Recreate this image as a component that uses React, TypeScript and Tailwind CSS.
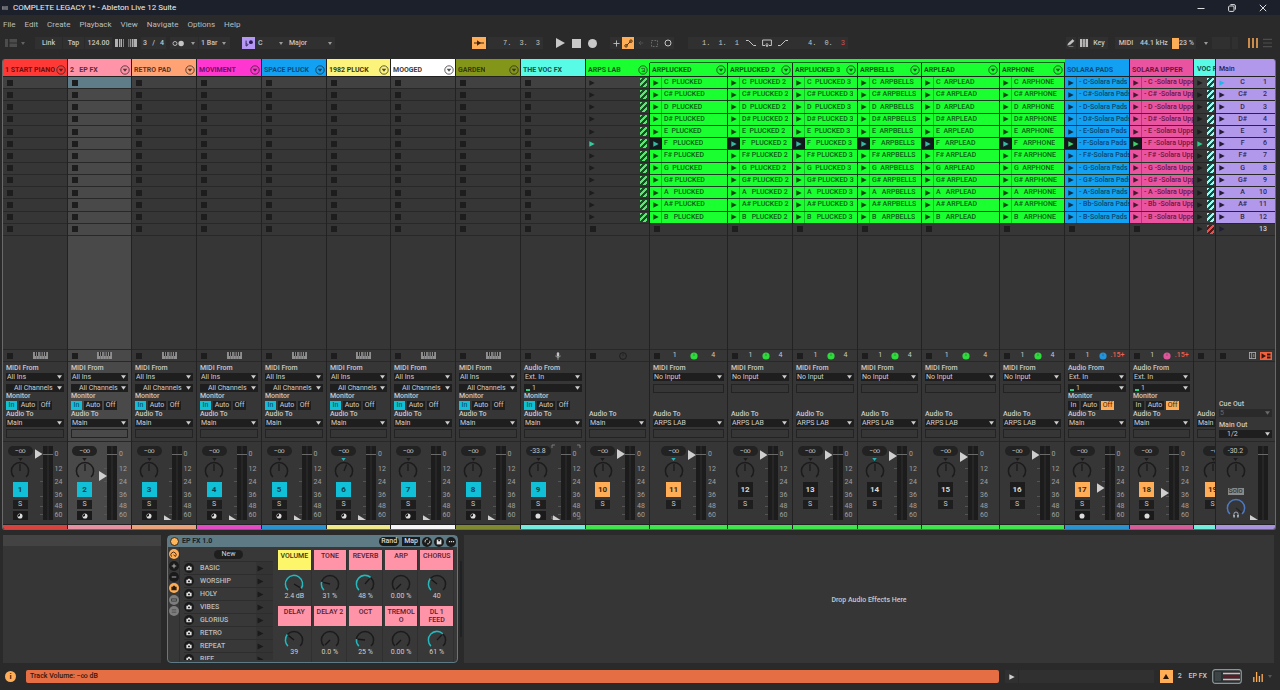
import React from "react";

type Monitor = "In" | "Off" | null;

interface Track {
  no: string;
  title: string;
  header: string;
  strip: string;
  io: "midi" | "audio" | "none" | "input" | "hidden";
  monitor: Monitor;
  badge: "cyan" | "orange" | "dark";
  vol: string;
  fader: number | null;
  arm?: "midi" | "audio";
  clip?: string;
  clipBg?: string;
  clips?: string[];
  group?: boolean;
  nested?: boolean;
  selected?: boolean;
  menu?: boolean;
  pan?: number;
  panMoved?: boolean;
  pie?: string;
  count?: string;
  out: string;
}

const KEYS = ["C", "C#", "D", "D#", "E", "F", "F#", "G", "G#", "A", "A#", "B"];
const GAPS = [2, 1, 2, 1, 2, 3, 1, 2, 1, 3, 1, 3];

const named = (s: string) => KEYS.map((k, i) => k + "\u00a0".repeat(GAPS[i]) + s);
const solara = (s: string, sep: string) =>
  KEYS.map((k, i) => `- ${i === 10 ? "Bb" : k}${sep}${s}`);

const midi = (no: string, title: string, header: string, strip: string, extra: Partial<Track> = {}): Track => ({
  no, title, header, strip, io: "midi", monitor: "In", badge: "cyan", vol: "−∞", fader: 0, arm: "midi", menu: true, out: "Main", ...extra,
});

const arp = (no: string, title: string, clip: string, fader: number, extra: Partial<Track> = {}): Track => ({
  no, title, header: "bg-[#1aff2f] text-[#0c5a16]", strip: "bg-[#3fe34c]", io: "input", monitor: null, badge: "dark", vol: "−∞",
  fader, menu: true, nested: true, clips: named(clip), clipBg: "bg-[#1aff2f] text-[#0b5d15]", pie: "#2fdb3c", count: "4", out: "ARPS LAB", ...extra,
});

const TRACKS: Track[] = [
  midi("1", "1 START PIANO", "bg-[#ff3a36] text-[#6d0f10]", "bg-[#d8423f]", { fader: 66 }),
  midi("2", "2\u00a0\u00a0\u00a0EP FX", "bg-[#ff94a8] text-[#5e2b38]", "bg-[#e690a2]", { fader: 44, selected: true }),
  midi("3", "RETRO PAD", "bg-[#ffa374] text-[#5f331c]", "bg-[#e9a27a]"),
  midi("4", "MOVIMENT", "bg-[#ff37d0] text-[#75105f]", "bg-[#e14bc4]"),
  midi("5", "SPACE PLUCK", "bg-[#12a1f2] text-[#0a4b78]", "bg-[#2b92d0]"),
  midi("6", "1982 PLUCK", "bg-[#fbf37c] text-[#3c3a14]", "bg-[#efe98a]", { pan: 0.58, panMoved: true }),
  midi("7", "MOOGED", "bg-[#ffffff] text-[#3c3c3c]", "bg-[#f6f6f6]"),
  midi("8", "GARDEN", "bg-[#84961a] text-[#343c08]", "bg-[#7f8a30]"),
  midi("9", "THE VOC FX", "bg-[#58fbe6] text-[#154f49]", "bg-[#74ebdc]", { io: "audio", vol: "-33.8", arm: "audio", menu: false }),
  midi("10", "ARPS LAB", "bg-[#1aff2f] text-[#0c5a16]", "bg-[#3fe34c]", { io: "none", monitor: null, badge: "orange", fader: 66, arm: undefined, group: true }),
  arp("11", "ARPLUCKED", "PLUCKED", 65, { badge: "orange", panMoved: true }),
  arp("12", "ARPLUCKED 2", "PLUCKED 2", 65),
  arp("13", "ARPLUCKED 3", "PLUCKED 3", 65),
  arp("14", "ARPBELLS", "ARPBELLS", 64, { panMoved: true }),
  arp("15", "ARPLEAD", "ARPLEAD", 63),
  arp("16", "ARPHONE", "ARPHONE", 65),
  midi("17", "SOLARA PADS", "bg-[#12a1f2] text-[#0a4b78]", "bg-[#2b92d0]", {
    io: "audio", monitor: "Off", badge: "orange", fader: 32, arm: "audio", menu: false,
    clips: solara("Solara Pads", "-"), clipBg: "bg-[#12a1f2] text-[#0a4670]", pie: "#2394dc", count: ".15+",
  }),
  midi("18", "SOLARA UPPER", "bg-[#ea539f] text-[#6a1641]", "bg-[#d45c99]", {
    io: "audio", monitor: "Off", badge: "orange", fader: 27, arm: "audio", menu: false,
    clips: solara("Solara Upper", " -"), clipBg: "bg-[#ea539f] text-[#6a1641]", pie: "#e0559c", count: ".15+",
  }),
];

const GRID =
  "grid-cols-[65fr_64fr_65fr_65fr_65fr_64fr_65fr_65fr_65fr_64fr_78fr_65fr_65fr_64fr_78fr_65fr_65fr_64fr_22fr_59fr]";

const ROW = "min-w-0 overflow-hidden border-b border-[#282828]";

function Play({ className = "text-[#1c1c1c]" }: { className?: string }) {
  return (
    <svg viewBox="0 0 6 6" className={`h-[6px] w-[6px] shrink-0 ${className}`}>
      <path d="M0.3 0.3 L5.7 3 L0.3 5.7 Z" fill="currentColor" />
    </svg>
  );
}

function Stop() {
  return <span className="h-[6px] w-[6px] shrink-0 bg-[#1d1d1d]" />;
}

function Caret({ className = "text-[#c4c4c4]" }: { className?: string }) {
  return (
    <svg viewBox="0 0 6 4" className={`pointer-events-none h-[4px] w-[5px] shrink-0 ${className}`}>
      <path d="M0 0 H6 L3 4 Z" fill="currentColor" />
    </svg>
  );
}

function HeaderMenu({ fold = false }: { fold?: boolean }) {
  return (
    <button aria-label="Track options" className="shrink-0">
      <svg viewBox="0 0 10 10" className="h-[10px] w-[10px] text-[#222] opacity-80">
        <circle cx="5" cy="5" r="4.2" fill="none" stroke="currentColor" strokeWidth="0.9" />
        {fold ? (
          <path d="M3.2 3.4 H6.6 V6.6 H3.6 M4.4 5 L6.6 6.6" fill="none" stroke="currentColor" strokeWidth="0.7" />
        ) : (
          <path d="M2.7 3.8 H7.3 L5 6.7 Z" fill="currentColor" />
        )}
      </svg>
    </button>
  );
}

function Keyboard() {
  return (
    <svg viewBox="0 0 15 7" className="h-[7px] w-[15px]">
      <rect width="15" height="7" fill="#8f8f8f" />
      <path d="M2.5 0 V4 M4.5 0 V4 M8 0 V4 M10.3 0 V4 M12.6 0 V4" stroke="#2a2a2a" strokeWidth="1.1" />
      <path d="M3.5 4 V7 M6.2 0 V7 M9 4 V7 M11.5 4 V7" stroke="#5a5a5a" strokeWidth="0.5" />
    </svg>
  );
}

function Dial({ value, label, accent, track = "#1b1b1b", pointer = "#1b1b1b", className = "h-[20px] w-[20px]" }: {
  value: number; label: string; accent?: string; track?: string; pointer?: string; className?: string;
}) {
  const at = (v: number, r: number) => {
    const a = ((v * 270 + 135) * Math.PI) / 180;
    return `${(10 + r * Math.cos(a)).toFixed(2)} ${(10 + r * Math.sin(a)).toFixed(2)}`;
  };
  return (
    <span className={`relative block shrink-0 ${className}`}>
      <svg viewBox="0 0 20 20" className="h-full w-full">
        <path d={`M${at(0, 8.6)} A8.6 8.6 0 1 1 ${at(1, 8.6)}`} fill="none" stroke={track} strokeWidth="1.5" />
        {accent && value > 0 && (
          <path d={`M${at(0, 8.6)} A8.6 8.6 0 ${value > 0.66 ? 1 : 0} 1 ${at(value, 8.6)}`} fill="none" stroke={accent} strokeWidth="1.6" />
        )}
        <path d={`M10 10 L${at(value, 7)}`} stroke={pointer} strokeWidth="1.3" />
      </svg>
      <input type="range" aria-label={label} min={0} max={100} defaultValue={Math.round(value * 100)} className="absolute inset-0 h-full w-full opacity-0" />
    </span>
  );
}

function Select({ label, value, indent = "pl-1", lit = false, dim = false }: {
  label: string; value: string; indent?: string; lit?: boolean; dim?: boolean;
}) {
  return (
    <span className={`flex h-[8px] items-center pr-[2px] ${dim ? "bg-[#2a2a2a]" : "bg-[#1e1e1e]"}`}>
      {lit && <span className="ml-[2px] h-[2px] w-[4px] shrink-0 self-end bg-[#25d07c] mb-px" />}
      <select aria-label={label} className={`h-[8px] min-w-0 flex-1 appearance-none text-[7px] leading-[8px] outline-none ${indent} ${dim ? "text-[#6a6a6a]" : "text-[#cfcfcf]"}`}>
        <option>{value}</option>
      </select>
      <Caret className={dim ? "text-[#6a6a6a]" : "text-[#cfcfcf]"} />
    </span>
  );
}

const Lbl = ({ children }: { children: React.ReactNode }) => (
  <span className="block h-[9px] text-[7px] leading-[9px] font-medium whitespace-nowrap text-[#c9c9c9]">{children}</span>
);

const EmptyBox = () => <span className="block h-[9px] border border-[#232323]" />;

function MonitorButtons({ active }: { active: Monitor }) {
  const on = active === "In" ? "bg-[#11bfd6] text-[#0b3f48]" : "bg-[#ffad56] text-[#3d2508]";
  return (
    <div className="flex h-[9px] gap-[2px] text-[7px] leading-[9px]">
      {["In", "Auto", "Off"].map((m) => (
        <button key={m} className={`${m === "Auto" ? "w-[18px]" : m === "Off" ? "w-[13px]" : "w-[11px]"} ${m === active ? on : "bg-[#1e1e1e] text-[#d0d0d0]"}`}>
          {m}
        </button>
      ))}
    </div>
  );
}

function IO({ t }: { t: Track }) {
  return (
    <div className="flex h-[80px] flex-col justify-between overflow-hidden border-b border-[#282828] px-[3px] pt-[2px] pb-[3px]">
      <div className="flex flex-col">
        {t.io !== "none" && (
          <>
            <Lbl>{t.io === "audio" ? "Audio From" : "MIDI From"}</Lbl>
            <Select label={`${t.title} input type`} value={t.io === "midi" ? "All Ins" : t.io === "audio" ? "Ext. In" : "No Input"} indent="pl-[1px]" />
            <div className="mt-[3px]">
              {t.io === "input" ? <EmptyBox /> : t.io === "audio" ? (
                <Select label={`${t.title} input channel`} value="1" indent="pl-[2px]" lit />
              ) : (
                <Select label={`${t.title} input channel`} value="All Channels" indent="pl-2" />
              )}
            </div>
          </>
        )}
        {t.monitor && (
          <>
            <Lbl>Monitor</Lbl>
            <MonitorButtons active={t.monitor} />
          </>
        )}
      </div>
      <div className="flex flex-col">
        <Lbl>Audio To</Lbl>
        <Select label={`${t.title} output`} value={t.out} indent="pl-[1px]" />
        <div className="mt-[2px]"><EmptyBox /></div>
      </div>
    </div>
  );
}

function Fader({ value, label, scale = true }: { value: number | null; label: string; scale?: boolean }) {
  return (
    <div className="flex h-[74px] overflow-hidden">
      {value === null ? (
        <span className="w-[8px]" />
      ) : (
        <input
          type="range" aria-label={label} min={0} max={69} defaultValue={value}
          className="h-[79px] w-[8px] appearance-none bg-transparent [direction:rtl] [writing-mode:vertical-lr] [&::-webkit-slider-thumb]:h-[10px] [&::-webkit-slider-thumb]:w-[8px] [&::-webkit-slider-thumb]:appearance-none [&::-webkit-slider-thumb]:bg-[#cfcfcf] [&::-webkit-slider-thumb]:[clip-path:polygon(0_0,100%_50%,0_100%)]"
        />
      )}
      <svg viewBox="0 0 10 74" className="h-[74px] w-[10px] shrink-0">
        <rect width="10" height="74" fill="#1c1c1c" />
        <rect x="4.5" width="1" height="74" fill="#303030" />
        <rect y="8" width="10" height="1" fill="#6a6a6a" />
      </svg>
      {scale && (
        <div className="flex w-[10px] flex-col pl-[2px] text-[7px] font-normal text-[#a0a0a0]">
          <span className="h-[16px] leading-[16px]">0</span>
          <span className="h-[14px] leading-[14px]">12</span>
          <span className="h-[13px] leading-[13px]">24</span>
          <span className="h-[13px] leading-[13px]">36</span>
          <span className="h-[9px] leading-[9px]">48</span>
          <span className="h-[9px] leading-[9px]">60</span>
        </div>
      )}
    </div>
  );
}

function Ticks() {
  return (
    <svg viewBox="0 0 3 74" className="pointer-events-none h-[74px] w-[3px]">
      {[22, 35, 50, 60, 68].map((y) => <rect key={y} y={y} width="3" height="1" fill="#555" />)}
    </svg>
  );
}

const BADGE = {
  cyan: "bg-[#11bfd6] text-[#0b3f48]",
  orange: "bg-[#ffad56] text-[#3d2508]",
  dark: "bg-[#1c1c1c] text-[#d8d8d8]",
};

function VolumePill({ children }: { children: React.ReactNode }) {
  return <span className="block h-[10px] w-[25px] rounded-full bg-[#222] text-center text-[7px] leading-[10px] text-[#c4c4c4]">{children}</span>;
}

function Pan({ value = 0.5, moved = false, label }: { value?: number; moved?: boolean; label: string }) {
  return (
    <div className="flex w-[20px] flex-col items-center">
      <svg viewBox="0 0 6 4" className={`mt-[2px] h-[3px] w-[5px] ${moved ? "text-[#22b5b5]" : "text-[#1b1b1b]"}`}>
        <path d="M0 0 H6 L3 4 Z" fill="currentColor" />
      </svg>
      <Dial value={value} label={label} />
    </div>
  );
}

function FocusCorners() {
  return (
    <svg viewBox="0 0 30 76" className="pointer-events-none h-[76px] w-[30px]">
      <path d="M1 4 V1 H4 M26 1 H29 V4 M1 72 V75 H4 M26 75 H29 V72" fill="none" stroke="#8a8a8a" strokeWidth="0.8" />
    </svg>
  );
}

function Mixer({ t }: { t: Track }) {
  return (
    <div className="flex h-[82px] justify-center overflow-hidden pt-[4px]">
      <div className="flex w-[25px] shrink-0 flex-col items-center">
        <VolumePill>{t.vol}</VolumePill>
        <Pan value={t.pan} moved={t.panMoved} label={`${t.title} pan`} />
        <button className={`mt-px h-[15px] w-[15px] text-[8px] leading-[15px] font-bold ${BADGE[t.badge]}`}>{t.no}</button>
        <button className="mt-[3px] h-[9px] w-[15px] bg-[#1e1e1e] text-[7px] leading-[9px] text-[#c9c9c9]">S</button>
        {t.arm && (
          <button aria-label={`Arm ${t.title}`} className="mt-[2px] flex h-[9px] w-[15px] items-center justify-center bg-[#1a1a1a]">
            <svg viewBox="0 0 8 8" className="h-[6px] w-[6px]">
              <circle cx="4" cy="4" r="3.4" fill="#dcdcdc" />
              {t.arm === "midi" && <path d="M4 4 V1.2 A2.8 2.8 0 0 0 1.4 5 Z" fill="#1a1a1a" />}
            </svg>
          </button>
        )}
      </div>
      <div className="relative ml-[2px] flex shrink-0">
        <span className="absolute top-0 left-[5px]"><Ticks /></span>
        {t.no === "9" && <span className="absolute -top-[2px] -left-[2px]"><FocusCorners /></span>}
        <Fader value={t.fader} label={`${t.title} volume`} />
      </div>
    </div>
  );
}

function Status({ t }: { t: Track }) {
  return (
    <div className="flex h-[13px] items-center overflow-hidden border-y border-[#282828] pl-1">
      <Stop />
      {t.pie ? (
        <div className="mr-1 ml-[5px] grid flex-1 grid-cols-3 items-center justify-items-center text-[7px] text-[#c9c9c9]">
          <span>1</span>
          <svg viewBox="0 0 8 8" className="h-[8px] w-[8px]">
            <circle cx="4" cy="4" r="3.6" fill={t.pie} />
            <path d="M4 4 V1.6" stroke="#1b3b1e" strokeWidth="0.4" />
          </svg>
          <span className={t.count === "4" ? "" : "font-medium text-[#f0604c]"}>{t.count}</span>
        </div>
      ) : (
        <div className="flex flex-1 justify-center">
          {t.io === "midi" && <Keyboard />}
          {t.io === "audio" && (
            <svg viewBox="0 0 6 8" className="h-[8px] w-[6px]">
              <rect x="1.8" y="0.2" width="2.4" height="4.6" rx="1.2" fill="#c4c4c4" />
              <path d="M0.8 3.6 C1 6 5 6 5.2 3.6 M3 5.4 V7.8" fill="none" stroke="#c4c4c4" strokeWidth="0.7" />
            </svg>
          )}
          {t.group && (
            <svg viewBox="0 0 8 8" className="h-[8px] w-[8px]">
              <circle cx="4" cy="4" r="3.4" fill="none" stroke="#1c1c1c" strokeWidth="0.9" />
              <path d="M4 4 V1.6" stroke="#1c1c1c" strokeWidth="0.7" />
            </svg>
          )}
        </div>
      )}
    </div>
  );
}

const GREEN_HATCH = "bg-[repeating-linear-gradient(135deg,#5fe276_0px,#5fe276_2px,#14501f_2px,#14501f_4px)]";
const TEAL_HATCH = "bg-[repeating-linear-gradient(135deg,#9afcf0_0px,#9afcf0_2px,#135049_2px,#135049_4px)]";
const RED_HATCH = "bg-[repeating-linear-gradient(135deg,#f04c4c_0px,#f04c4c_2px,#5c1616_2px,#5c1616_4px)]";

function Slots({ t }: { t: Track }) {
  return (
    <div className="grid h-[159px] grid-rows-13">
      {Array.from({ length: 13 }, (_, i) => {
        if (t.clips && i < 12) {
          const playing = i === 5;
          return (
            <div key={i} className={`flex border-b border-[#1f3a24] ${t.clipBg} min-w-0 overflow-hidden`}>
              <button aria-label={`Launch ${t.clips[i]}`} className={`flex w-[12px] shrink-0 items-center justify-center border-r border-black/25 ${playing ? "bg-[#121a1c]" : ""}`}>
                <Play className={playing ? (t.pie === "#2fdb3c" ? "text-[#35b9a4]" : "text-[#3fd06a]") : "text-black/70"} />
              </button>
              <span className="flex items-center overflow-hidden pl-[2px] text-[7px] leading-[11px] font-medium whitespace-pre">{t.clips[i]}</span>
            </div>
          );
        }
        if (t.group && i < 12) {
          return (
            <div key={i} className={`${ROW} flex items-stretch justify-between pr-[2px] pl-[3px] ${i === 0 ? "bg-[#414141]" : ""}`}>
              <button aria-label={`Launch group slot ${i + 1}`} className="flex items-center">
                <Play className={i === 5 ? "text-[#35c9a0]" : "text-[#1c1c1c]"} />
              </button>
              <span className={`my-px w-[7px] ${GREEN_HATCH}`} />
            </div>
          );
        }
        return (
          <div key={i} className={`${ROW} flex items-center pl-1 ${i === 0 ? (t.selected ? "bg-[#5f7d88]" : "bg-[#414141]") : ""}`}>
            <Stop />
          </div>
        );
      })}
    </div>
  );
}

function Column({ t }: { t: Track }) {
  return (
    <section className={`flex min-w-0 flex-col border-r border-[#222] ${t.selected ? "bg-[#494949]" : "bg-[#363636]"}`}>
      <header className={`flex h-[18px] flex-col border-b border-[#222] ${t.header}`}>
        <span className={`h-[4px] shrink-0 ${t.nested ? "-mr-px border-b border-[#0e6a1a] bg-[#1aff2f]" : ""} ${t.group ? "-mr-px bg-[#1aff2f]" : ""}`} />
        <span className="flex flex-1 items-center justify-between overflow-hidden pr-px pl-[2px]">
          <span className="min-w-0 overflow-hidden text-[7px] leading-[10px] font-bold whitespace-nowrap">{t.title}</span>
          {t.menu && <HeaderMenu fold={t.group} />}
        </span>
      </header>
      <Slots t={t} />
      <div className="flex-1" />
      <Status t={t} />
      <IO t={t} />
      <Mixer t={t} />
      <span className={`h-[5px] border-t border-[#222] ${t.strip}`} />
    </section>
  );
}

function VocColumn() {
  return (
    <section className="flex min-w-0 flex-col overflow-hidden border-r border-[#222] bg-[#363636]">
      <header className="flex h-[18px] items-center overflow-hidden border-b border-[#222] bg-[#58fbe6] pt-[4px] pl-[3px] text-[7px] font-bold whitespace-nowrap text-[#154f49]">VOC FX</header>
      <div className="grid h-[159px] grid-rows-13">
        {Array.from({ length: 13 }, (_, i) => (
          <div key={i} className={`${ROW} flex items-stretch justify-between pr-px pl-[3px] ${i === 0 ? "bg-[#414141]" : ""}`}>
            <button aria-label={`Launch VOC slot ${i + 1}`} className="flex items-center">
              <Play className={i === 5 ? "text-[#2fc98a]" : "text-[#1c1c1c]"} />
            </button>
            <span className={`my-px w-[7px] ${i === 12 ? RED_HATCH : TEAL_HATCH}`} />
          </div>
        ))}
      </div>
      <div className="flex-1" />
      <div className="flex h-[13px] items-center border-y border-[#282828] pl-1"><Stop /></div>
      <div className="flex h-[80px] flex-col justify-end border-b border-[#282828] pb-[3px] pl-[3px]">
        <Lbl>Audio To</Lbl>
        <span className="h-[8px] bg-[#1e1e1e] pl-px text-[7px] leading-[8px] text-[#cfcfcf]">Main</span>
        <span className="mt-[2px] h-[9px] border border-r-0 border-[#232323]" />
      </div>
      <div className="flex h-[82px] overflow-hidden pt-[4px] pl-[9px]">
        <div className="flex w-[25px] shrink-0 flex-col items-start">
          <VolumePill>−∞</VolumePill>
          <Pan label="VOC pan" />
          <button className={`mt-px ml-[2px] h-[15px] w-[15px] text-[8px] leading-[15px] font-bold ${BADGE.orange}`}>19</button>
          <button className="mt-[3px] ml-[2px] h-[9px] w-[15px] bg-[#1e1e1e] text-[7px] leading-[9px] text-[#c9c9c9]">S</button>
        </div>
      </div>
      <span className="h-[5px] border-t border-[#222] bg-[#74ebdc]" />
    </section>
  );
}

function MainColumn() {
  return (
    <section className="flex min-w-0 flex-col overflow-hidden bg-[#363636]">
      <header className="flex h-[18px] items-center border-b border-[#222] bg-[#b198ea] pt-[4px] pl-[3px] text-[7px] font-medium text-[#2c2340]">Main</header>
      <div className="grid h-[159px] grid-rows-13">
        {Array.from({ length: 13 }, (_, i) => (
          <button key={i} className={`grid grid-cols-[14fr_30fr_15fr] items-center border-b border-[#282828] pr-2 pl-[3px] text-[7px] leading-[11px] font-medium ${i < 12 ? "bg-[#b198ea] text-[#33284d]" : "text-[#d0d0d0]"}`}>
            <Play className={i === 0 ? "text-[#22b8e6]" : "text-[#231c36]"} />
            <span>{KEYS[i] ?? ""}</span>
            <span className="text-right">{i + 1}</span>
          </button>
        ))}
      </div>
      <div className="flex-1" />
      <div className="flex h-[13px] items-center border-y border-[#282828] pr-[3px] pl-1">
        <Stop />
        <svg viewBox="0 0 8 8" className="ml-auto h-[7px] w-[7px]">
          <rect x="0.5" y="0.5" width="7" height="7" fill="none" stroke="#aaa" />
          <path d="M3 0.5 V7.5 M5.5 2.2 V5.8" stroke="#aaa" strokeWidth="0.9" />
        </svg>
        <svg viewBox="0 0 12 8" className="ml-[4px] h-[8px] w-[12px]">
          <rect width="12" height="8" fill="#f0623f" />
          <path d="M1.5 1.2 L6 4 L1.5 6.8 Z M7 1.6 H10.5 V3.4 H7 Z M7 4.6 H10.5 V6.4 H7 Z" fill="#3a1610" />
        </svg>
      </div>
      <div className="flex h-[80px] flex-col justify-end border-b border-[#282828] pr-[3px] pb-[3px] pl-[3px]">
        <Lbl>Cue Out</Lbl>
        <Select label="Cue Out" value="5" indent="pl-[1px]" dim />
        <div className="mt-[4px]"><Lbl>Main Out</Lbl></div>
        <Select label="Main Out" value="1/2" indent="pl-2" />
      </div>
      <div className="flex h-[82px] justify-center overflow-hidden pt-[4px]">
        <div className="flex w-[25px] flex-col items-center">
          <VolumePill>-30.2</VolumePill>
          <Pan label="Main pan" />
          <button className="mt-[7px] h-[7px] w-[16px] bg-[#8a8a8a] text-[7px] leading-[7px] text-[#262626]">Solo</button>
          <span className="relative mt-[3px]">
            <Dial value={0.98} label="Cue volume" track="#4d79c4" pointer="#232323" />
            <svg viewBox="0 0 8 8" className="pointer-events-none absolute bottom-0 left-[6px] h-[7px] w-[8px]">
              <path d="M1.6 6 V3.6 A2.4 2.4 0 0 1 6.4 3.6 V6" fill="none" stroke="#b9c4d6" strokeWidth="0.9" />
              <path d="M1 4.6 H2.6 V7.4 H1 Z M5.4 4.6 H7 V7.4 H5.4 Z" fill="#b9c4d6" />
            </svg>
          </span>
        </div>
        <div className="ml-[2px] flex">
          <Fader value={0} label="Main volume" scale={false} />
        </div>
      </div>
      <span className="h-[5px] border-t border-[#222] bg-[#a893dc]" />
    </section>
  );
}

const BOX = "flex h-[12px] items-center bg-[#303030]";

function SmallCaret() {
  return <svg viewBox="0 0 4 3" className="h-[3px] w-[4px] shrink-0 text-[#9a9a9a]"><path d="M0 0 H4 L2 3 Z" fill="currentColor" /></svg>;
}

function Position({ parts, lastRed = false }: { parts: string[]; lastRed?: boolean }) {
  return (
    <span className="flex gap-[8px] font-mono">
      {parts.map((p, i) => <span key={i} className={lastRed && i === 2 ? "text-[#d65050]" : ""}>{p}</span>)}
    </span>
  );
}

function Transport() {
  return (
    <div className="grid h-[26px] grid-cols-[472fr_594fr_214fr] items-start pt-[4px] text-[7px] leading-[12px] font-medium text-[#c4c4c4]">
      <div className="flex items-center pl-[5px]">
        <svg viewBox="0 0 12 8" className="h-[8px] w-[12px] text-[#4c4c4c]"><path d="M0 0 H3 V8 H0 Z M4.5 0 H12 V3.6 H4.5 Z M4.5 4.4 H12 V8 H4.5 Z" fill="currentColor" /></svg>
        <span className="ml-1 opacity-50"><SmallCaret /></span>
        <button className={`${BOX} ml-[10px] w-[27px] justify-center`}>Link</button>
        <button className={`${BOX} ml-px w-[21px] justify-center`}>Tap</button>
        <label className={`${BOX} ml-px`}>
          <input aria-label="Tempo" defaultValue="124.00" className="h-[12px] w-[27px] bg-transparent text-center outline-none" />
        </label>
        <svg viewBox="0 0 22 8" className="ml-[3px] h-[8px] w-[22px] text-[#b0b0b0]">
          <path d="M0 0 H3 V8 H0 Z M4 0 H5.5 V8 H4 Z M6 0 H7 V8 H6 Z M8 0 H8.7 V8 H8 Z M13.5 0 H14.2 V8 H13.5 Z M15.2 0 H16.2 V8 H15.2 Z M17 0 H18.5 V8 H17 Z M19 0 H22 V8 H19 Z" fill="currentColor" />
        </svg>
        <span className={`${BOX} ml-[4px] w-[25px] justify-between px-[2px]`}><span>3</span><span>/</span><span>4</span></span>
        <button aria-label="Metronome" className={`${BOX} ml-[4px] gap-[6px] pr-[3px] pl-[2px]`}>
          <svg viewBox="0 0 14 8" className="h-[7px] w-[13px]">
            <circle cx="3" cy="4" r="2.3" fill="none" stroke="#c4c4c4" /><circle cx="10" cy="4" r="3.1" fill="#c4c4c4" />
          </svg>
          <SmallCaret />
        </button>
        <button className={`${BOX} ml-px w-[31px] justify-between pr-[4px] pl-[2px]`}>1 Bar<SmallCaret /></button>
        <button aria-label="Scale mode" className="ml-[12px] flex h-[12px] w-[13px] items-center justify-center bg-[#b598f5]">
          <svg viewBox="0 0 12 10" className="h-[9px] w-[10px]"><path d="M2.5 1.5 V8 C5.5 7.5 5 5 2.8 5.4" stroke="#2c1c55" strokeWidth="1.1" fill="none" /><circle cx="8.3" cy="3.4" r="2.3" fill="#2c1c55" /></svg>
        </button>
        <button className={`${BOX} w-[31px] justify-between pr-[3px] pl-[3px]`}>C<SmallCaret /></button>
        <button className={`${BOX} w-[49px] justify-between pr-[3px] pl-[3px]`}>Major<SmallCaret /></button>
      </div>

      <div className="flex items-center">
        <button aria-label="Follow" className="flex h-[12px] w-[14px] items-center justify-center bg-[#ffad56]">
          <svg viewBox="0 0 12 8" className="h-[8px] w-[12px]"><path d="M1 4 H11" stroke="#3d2508" /><path d="M4 1.2 L8 4 L4 6.8 Z" fill="#3d2508" /></svg>
        </button>
        <span className={`${BOX} ml-[2px] w-[55px] justify-end pr-[3px]`}><Position parts={["7.", "3.", "3"]} /></span>
        <button aria-label="Play" className="ml-[13px]"><svg viewBox="0 0 9 10" className="h-[10px] w-[9px]"><path d="M0 0 L9 5 L0 10 Z" fill="#c8c8c8" /></svg></button>
        <button aria-label="Stop" className="ml-[7px] h-[9px] w-[9px] bg-[#c8c8c8]" />
        <button aria-label="Record" className="ml-[7px] h-[9px] w-[9px] rounded-full bg-[#c8c8c8]" />
        <button aria-label="Overdub" className={`${BOX} ml-[13px] w-[12px] justify-center`}><svg viewBox="0 0 8 8" className="h-[7px] w-[7px]"><path d="M4 0.5 V7.5 M0.5 4 H7.5" stroke="#c4c4c4" /></svg></button>
        <button aria-label="Automation arm" className="flex h-[12px] w-[12px] items-center justify-center bg-[#ffad56]">
          <svg viewBox="0 0 10 10" className="h-[9px] w-[9px]"><path d="M2.8 7.2 L7.2 2.8" stroke="#3d2508" /><circle cx="2.3" cy="7.6" r="1.4" fill="none" stroke="#3d2508" /><circle cx="7.7" cy="2.4" r="1.4" fill="none" stroke="#3d2508" /></svg>
        </button>
        <span className={`${BOX} ml-px w-[39px] justify-between pr-[2px] pl-[3px]`}>
          <svg viewBox="0 0 8 8" className="h-[6px] w-[6px]"><path d="M7 4 H1 M4 1.4 L1.4 4 L4 6.6" stroke="#5c5c5c" fill="none" /></svg>
          <svg viewBox="0 0 8 8" className="h-[7px] w-[7px]"><rect x="0.5" y="0.5" width="7" height="7" fill="none" stroke="#777" strokeDasharray="2 1.5" /></svg>
          <svg viewBox="0 0 8 8" className="h-[8px] w-[8px]"><circle cx="4" cy="4" r="3" fill="none" stroke="#c4c4c4" /></svg>
        </span>
        <span className={`${BOX} ml-[14px] w-[160px]`}>
          <span className="ml-[14px]"><Position parts={["1.", "1.", "1"]} /></span>
          <svg viewBox="0 0 10 8" className="ml-[7px] h-[8px] w-[10px]"><path d="M0 1.5 H2.5 L7.5 6.5 H10" fill="none" stroke="#c4c4c4" /></svg>
          <svg viewBox="0 0 10 8" className="ml-[6px] h-[8px] w-[10px]"><path d="M3 6.5 H0.6 V1 H9.4 V6.5 H7 M5 4 V8 M3.5 5.6 L5 7.4 L6.5 5.6" fill="none" stroke="#c4c4c4" /></svg>
          <svg viewBox="0 0 10 8" className="ml-[6px] h-[8px] w-[10px]"><path d="M0 6.5 H2.5 L7.5 1.5 H10" fill="none" stroke="#c4c4c4" /></svg>
          <span className="mr-[3px] ml-auto"><Position parts={["4.", "0.", "3"]} lastRed /></span>
        </span>
      </div>

      <div className="flex items-center">
        <button aria-label="Draw mode" className={`${BOX} w-[10px] justify-center`}><svg viewBox="0 0 10 10" className="h-[8px] w-[8px]"><path d="M0.8 7.8 L2 5 L7 0.6 L9 2.6 L4 7 Z M2 9.3 H8" fill="#c4c4c4" stroke="#c4c4c4" strokeWidth="0.6" /></svg></button>
        <button aria-label="Computer keyboard" className={`${BOX} ml-[2px] w-[11px] justify-center`}><svg viewBox="0 0 9 9" className="h-[8px] w-[8px]"><rect width="9" height="9" fill="#bdbdbd" /><path d="M3 0 V5 M6 0 V5 M3 5 V9 M6 5 V9" stroke="#2a2a2a" strokeWidth="0.8" /></svg></button>
        <button className={`${BOX} ml-px w-[18px] justify-center`}>Key</button>
        <button className={`${BOX} ml-[7px] w-[22px] justify-center`}>MIDI</button>
        <span className={`${BOX} w-[34px] justify-center whitespace-nowrap`}>44.1 kHz</span>
        <span className={`${BOX} ml-px w-[24px] whitespace-nowrap`}><span className="h-[11px] w-[7px] shrink-0 bg-[#ffad56]" />23 %</span>
        <span className="ml-[8px]"><SmallCaret /></span>
        <span className={`${BOX} ml-[4px] w-[18px]`} />
        <span className={`${BOX} ml-[2px] w-[6px]`} />
        <button aria-label="Session view" className="ml-auto"><svg viewBox="0 0 10 10" className="h-[10px] w-[10px]"><path d="M1 0 V10 M5 0 V10 M9 0 V10" stroke="#ffad56" strokeWidth="1.5" /></svg></button>
        <button aria-label="Arrangement view" className="mr-[8px] ml-[5px]"><svg viewBox="0 0 10 10" className="h-[10px] w-[9px]"><path d="M0 1 H10 M0 5 H10 M0 9 H10" stroke="#4c4c4c" strokeWidth="1.2" /></svg></button>
      </div>
    </div>
  );
}

const MACROS: { name: string; v: number; text: string; yellow?: boolean }[] = [
  { name: "VOLUME", v: 0.95, text: "2.4 dB", yellow: true },
  { name: "TONE", v: 0.22, text: "31 %" },
  { name: "REVERB", v: 0.65, text: "48 %" },
  { name: "ARP", v: 0, text: "0.00 %" },
  { name: "CHORUS", v: 0.31, text: "40" },
  { name: "DELAY", v: 0.31, text: "39" },
  { name: "DELAY 2", v: 0, text: "0.0 %" },
  { name: "OCT", v: 0.19, text: "25 %" },
  { name: "TREMOLO", v: 0, text: "0.00 %" },
  { name: "DL 1 FEED", v: 0.66, text: "61 %" },
];

const CHAINS = ["BASIC", "WORSHIP", "HOLY", "VIBES", "GLORIUS", "RETRO", "REPEAT", "RIFF"];

function Camera({ className = "text-[#e0e0e0]" }: { className?: string }) {
  return (
    <svg viewBox="0 0 8 7" className={`h-[6px] w-[6px] ${className}`}>
      <path d="M0.5 1.8 H2.2 L3 0.6 H5 L5.8 1.8 H7.5 V6.4 H0.5 Z" fill="currentColor" />
      <circle cx="4" cy="4" r="1.3" fill="#1a1a1a" />
    </svg>
  );
}

const ROUND = "flex h-[10px] w-[10px] items-center justify-center rounded-full";

function Device() {
  return (
    <section className="flex w-[291px] shrink-0 flex-col rounded-sm border border-[#5d7a85] bg-[#383838]">
      <header className="flex h-[11px] items-center bg-[#5d7a85] pr-px pl-[2px] text-[7px] font-medium text-[#15212a]">
        <span className="h-[9px] w-[9px] rounded-full border border-[#33271a] bg-[#ffb55a]" />
        <h2 className="ml-[3px] font-bold">EP FX 1.0</h2>
        <button className="ml-auto h-[9px] rounded-full bg-[#1a1a1a] px-[2px] leading-[9px] text-[#d8d8d8]">Rand</button>
        <button className="ml-[3px] h-[9px] bg-[#1a1a1a] px-[2px] leading-[9px] text-[#d8d8d8]">Map</button>
        <button aria-label="Hot swap" className={`${ROUND} ml-[2px] bg-[#1a1a1a]`}>
          <svg viewBox="0 0 8 8" className="h-[7px] w-[7px]"><path d="M1.4 5 A2.8 2.8 0 0 1 4.4 1.2 M6.6 3 A2.8 2.8 0 0 1 3.6 6.8" fill="none" stroke="#d8d8d8" strokeWidth="1.1" /></svg>
        </button>
        <button aria-label="Save preset" className={`${ROUND} ml-[2px] bg-[#1a1a1a]`}>
          <svg viewBox="0 0 8 8" className="h-[6px] w-[6px]"><path d="M1 0.8 H7.2 V7.2 H1 Z" fill="#e0e0e0" /><path d="M3 1 H5.4 V3 H3 Z" fill="#1a1a1a" /></svg>
        </button>
        <button aria-label="More" className={`${ROUND} ml-[2px] bg-[#1a1a1a]`}>
          <svg viewBox="0 0 8 8" className="h-[7px] w-[7px]"><path d="M1 3.4 H2.4 V4.8 H1 Z M3.3 3.4 H4.7 V4.8 H3.3 Z M5.6 3.4 H7 V4.8 H5.6 Z" fill="#e0e0e0" /></svg>
        </button>
      </header>
      <div className="flex flex-1">
        <div className="flex w-[12px] shrink-0 flex-col items-center gap-px border-r border-[#2e2e2e] pt-[2px]">
          <button aria-label="Macro controls" className={`${ROUND} bg-[#ffad56]`}><svg viewBox="0 0 8 8" className="h-[7px] w-[7px]"><path d="M1.8 6.4 A3 3 0 1 1 6.2 6.4 M4 4.4 L6 6" fill="none" stroke="#33200a" /></svg></button>
          <button aria-label="Add macro" className={`${ROUND} mt-px bg-[#1a1a1a]`}><svg viewBox="0 0 8 8" className="h-[6px] w-[6px]"><path d="M4 1 V7 M1 4 H7" stroke="#d8d8d8" /></svg></button>
          <button aria-label="Remove macro" className={`${ROUND} bg-[#1a1a1a]`}><svg viewBox="0 0 8 8" className="h-[6px] w-[6px]"><path d="M1 4 H7" stroke="#d8d8d8" /></svg></button>
          <button aria-label="Variations" className={`${ROUND} bg-[#ffad56]`}><Camera className="text-[#33200a]" /></button>
          <button aria-label="Chains" className={`${ROUND} mt-px bg-[#7d7d7d]`}><svg viewBox="0 0 8 8" className="h-[6px] w-[6px]"><path d="M0.6 2.5 H7.4 V5.5 H0.6 Z" fill="none" stroke="#333" /></svg></button>
          <button aria-label="Devices" className={`${ROUND} bg-[#7d7d7d]`}><svg viewBox="0 0 8 8" className="h-[6px] w-[6px]"><path d="M1 2 H7 M1 4 H7 M1 6 H7" stroke="#555" /></svg></button>
        </div>
        <div className="ml-[4px] flex w-[89px] flex-col">
          <button className="mt-[3px] h-[9px] w-[29px] self-center rounded-full bg-[#1e1e1e] text-[7px] leading-[9px] text-[#d0d0d0]">New</button>
          <ul className="mt-[2px] h-[99px] overflow-hidden text-[7px] font-medium text-[#bdbdbd]">
            {CHAINS.map((c) => (
              <li key={c} className="flex h-[13px] items-center border-t border-[#2d2d2d]">
                <button aria-label={`Save ${c}`} className={`${ROUND} bg-[#1a1a1a]`}><Camera /></button>
                <span className="ml-[6px] flex-1">{c}</span>
                <button aria-label={`Launch ${c}`} className="flex h-[12px] w-[17px] items-center bg-[#333]">
                  <svg viewBox="0 0 7 7" className="ml-px h-[7px] w-[7px]"><path d="M0.5 0.5 L6.5 3.5 L0.5 6.5 Z" fill="#1a1a1a" /></svg>
                </button>
              </li>
            ))}
          </ul>
        </div>
        <div className="ml-[5px] grid flex-1 grid-cols-5 grid-rows-[56px_56px] gap-x-[2px] pt-[3px] pr-[3px]">
          {MACROS.map((m) => (
            <div key={m.name} className="flex flex-col items-center border-r border-[#303030] text-[7px] text-[#cfcfcf]">
              <span className={`flex h-[20px] w-full justify-center px-px pt-[2px] text-center leading-[8px] font-medium break-all ${m.yellow ? "bg-[#fdf66a] text-[#3a3810]" : "bg-[#ff94a8] text-[#54222e]"}`}>
                {m.name === "DL 1 FEED" ? <>DL 1<br />FEED</> : m.name}
              </span>
              <Dial value={m.v} label={m.name} accent="#27b7bd" pointer="#171717" className="mt-[4px] h-[20px] w-[20px]" />
              <span className="-mt-[3px] leading-[10px] font-normal">{m.text}</span>
            </div>
          ))}
        </div>
      </div>
    </section>
  );
}

export default function App() {
  return (
    <div className="flex min-h-screen flex-col overflow-hidden bg-[#2a2a2a] font-[Roboto,sans-serif] text-[#c9c9c9]">
      <div className="flex h-[15px] shrink-0 items-center bg-[#1c202a] text-[#f0f0f0]">
        <svg viewBox="0 0 10 6" className="ml-[2px] h-[4px] w-[6px]"><path d="M1 0 V6 M3 0 V6 M5 0 V6 M6 1 H10 M6 3 H10 M6 5 H10" stroke="#ddd" strokeWidth="0.9" /></svg>
        <h1 className="ml-[5px] text-[8px] leading-[15px]">COMPLETE LEGACY 1* - Ableton Live 12 Suite</h1>
        <div className="mr-[13px] ml-auto flex items-center gap-[23px]">
          <button aria-label="Minimize"><svg viewBox="0 0 8 8" className="h-[8px] w-[8px]"><path d="M0.5 4.5 H7.5" stroke="#ddd" /></svg></button>
          <button aria-label="Restore"><svg viewBox="0 0 8 8" className="h-[8px] w-[8px]"><rect x="0.6" y="2" width="5.4" height="5.4" rx="1" fill="none" stroke="#ddd" /><path d="M2.4 0.6 H6 Q7.4 0.6 7.4 2 V5.6" fill="none" stroke="#ddd" /></svg></button>
          <button aria-label="Close"><svg viewBox="0 0 8 8" className="h-[8px] w-[8px]"><path d="M0.8 0.8 L7.2 7.2 M7.2 0.8 L0.8 7.2" stroke="#ddd" /></svg></button>
        </div>
      </div>

      <nav className="flex h-[18px] shrink-0 items-center gap-[9px] pt-px pl-[3px] text-[8px] text-[#bdbdbd]">
        {["File", "Edit", "Create", "Playback", "View", "Navigate", "Options", "Help"].map((m) => (
          <button key={m}>{m}</button>
        ))}
      </nav>

      <Transport />

      <main className={`mr-[4px] ml-[2px] grid min-h-[471px] flex-1 ${GRID} overflow-hidden rounded-[3px] border-x border-b border-[#6a6a6a]`}>
        {TRACKS.map((t) => <Column key={t.no} t={t} />)}
        <VocColumn />
        <MainColumn />
      </main>

      <div className="mt-[5px] mr-[6px] ml-[3px] flex h-[128px] shrink-0">
        <div className="w-[158px] shrink-0 bg-[#363636]"><div className="h-[11px] bg-[#434343]" /></div>
        <div className="ml-[6px] flex"><Device /></div>
        <div className="mx-[2px] my-[26px] w-[2px] shrink-0 bg-[#1f2224]" />
        <div className="flex flex-1 items-center justify-center bg-[#363636] pt-[2px] text-[7px] font-medium">Drop Audio Effects Here</div>
      </div>

      <footer className="flex h-[27px] shrink-0 items-center pr-[8px] pl-[5px] text-[7px] font-medium">
        <button aria-label="Info" className="flex h-[11px] w-[11px] items-center justify-center rounded-full bg-[#ffad56] text-[8px] leading-[11px] font-bold text-[#33200a]">i</button>
        <p className="ml-[10px] h-[13px] w-[973px] shrink rounded-[2px] bg-[#e66e44] pl-[4px] leading-[13px] text-[#32160c]">Track Volume: −∞ dB</p>
        <button aria-label="Play clip" className="ml-[6px] flex h-[13px] w-[13px] items-center justify-center bg-[#303030]"><Play className="text-[#cfcfcf]" /></button>
        <span className="ml-px h-[13px] flex-1 bg-[#303030]" />
        <button aria-label="Show device view" className="ml-[6px] flex h-[13px] w-[13px] items-center justify-center bg-[#ffad56]">
          <svg viewBox="0 0 6 5" className="h-[5px] w-[6px]"><path d="M0 5 L3 0 L6 5 Z" fill="#2a1608" /></svg>
        </button>
        <span className="ml-[5px] whitespace-pre">2&nbsp;&nbsp;&nbsp; EP FX</span>
        <svg viewBox="0 0 30 15" className="ml-[5px] h-[15px] w-[30px]">
          <rect x="0.7" y="0.7" width="28.6" height="13.6" rx="2.5" fill="#2b3133" stroke="#8a9696" strokeWidth="1.2" />
          <rect x="3" y="3" width="6" height="9" fill="#3c4446" />
          <path d="M11 4.5 H28 M11 10.5 H28" stroke="#e8b2ba" strokeWidth="1.6" />
          <path d="M11 7.5 H28" stroke="#5c1f28" strokeWidth="2" />
        </svg>
        <svg viewBox="0 0 10 10" className="ml-[11px] h-[10px] w-[10px]"><path d="M0.8 5 V10 M3.6 0 V10 M6.4 4 V10 M9.2 2 V10" stroke="#ffad56" strokeWidth="1.3" /></svg>
        <span className="ml-[5px] opacity-40"><SmallCaret /></span>
      </footer>
    </div>
  );
}
